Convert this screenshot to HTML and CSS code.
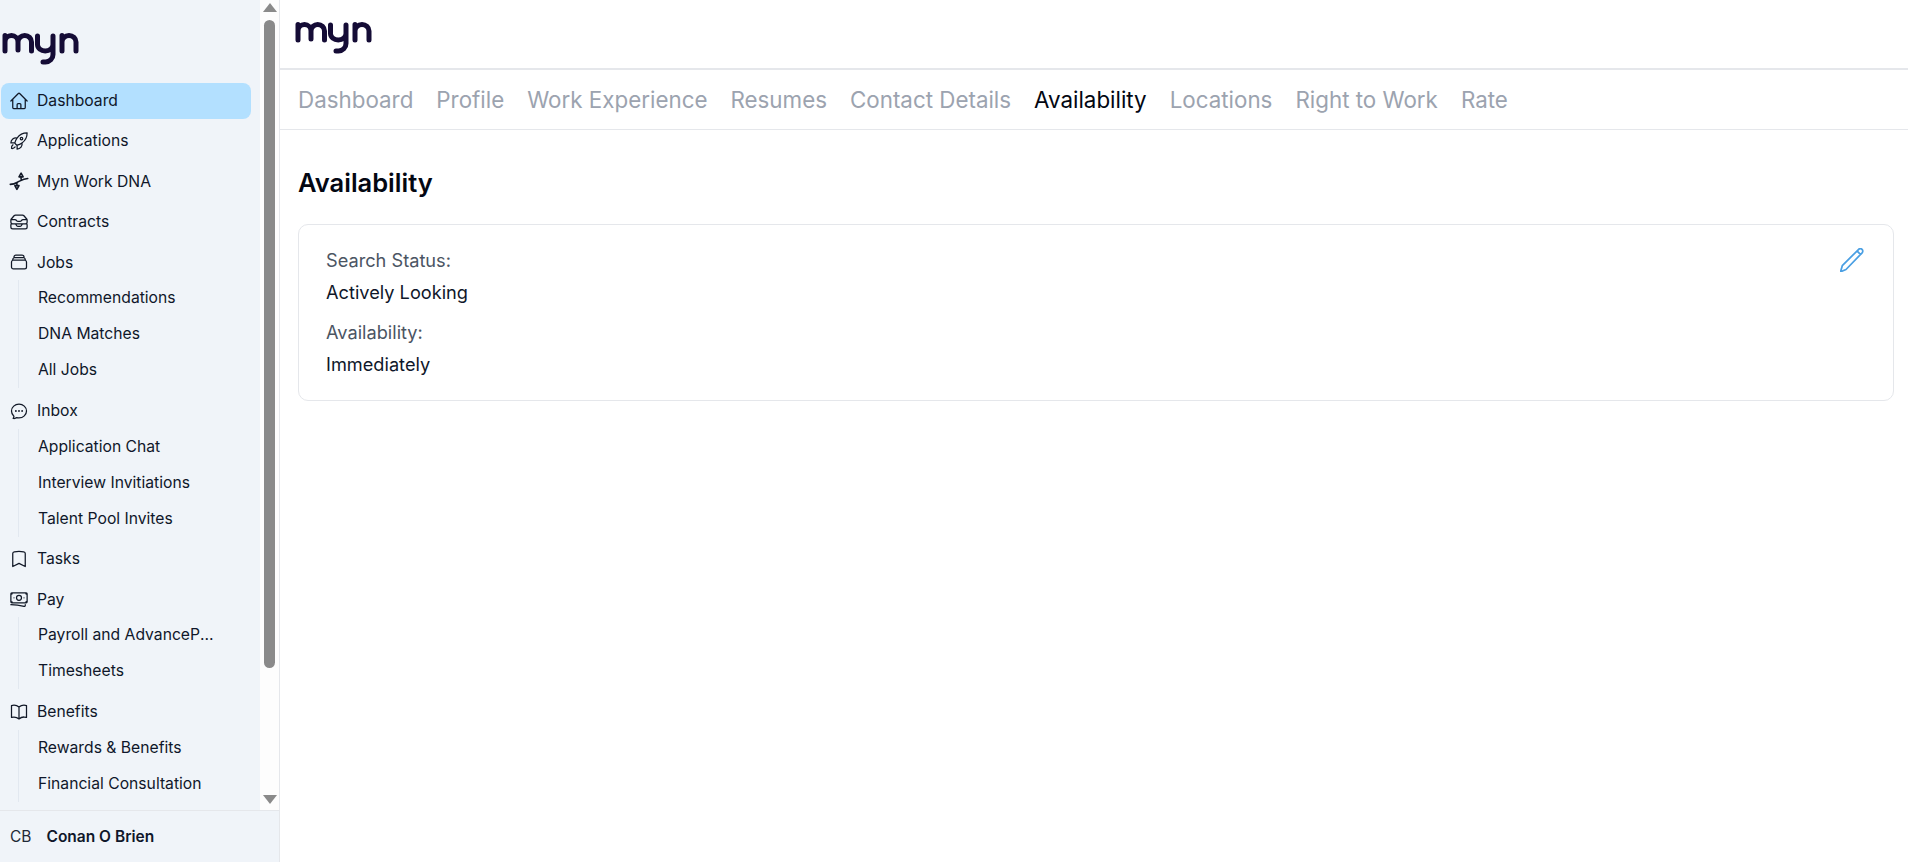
FILE: index.html
```html
<!DOCTYPE html>
<html lang="en">
<head>
<meta charset="utf-8">
<title>Availability</title>
<link rel="stylesheet" href="styles.css">
</head>
<body>
<svg class="defs" width="0" height="0" aria-hidden="true">
  <defs>
    <symbol id="logo" viewBox="0 0 80 36">
      <path d="M5 22V6.500M5 13a6.500 6.500 0 0 1 13 0V21M18 13a6.750 6.500 0 0 1 13.500 0V22M37.500 7V15.500a7.750 6.500 0 0 0 15.500 0V7M53 15V25.500a7.500 7.500 0 0 1-7.500 7.500H43M62 22V6.500M62 13a7 6.500 0 0 1 14 0V22" fill="none" stroke="#150c36" stroke-width="5" stroke-linecap="round" stroke-linejoin="round"/>
    </symbol>
  </defs>
</svg>
<div class="app">
  <aside class="sidebar">
    <div class="side-scroll">
      <nav class="side-nav">
        <svg class="logo logo-side"><use href="#logo"/></svg>
        <div class="groups">
          <a class="row active">
            <svg class="ico" viewBox="0 0 24 24"><path d="M2.250 12l8.954-8.955c.44-.439 1.152-.439 1.591 0L21.750 12M4.500 9.750v10.125c0 .621.504 1.125 1.125 1.125H9.750v-4.875c0-.621.504-1.125 1.125-1.125h2.250c.621 0 1.125.504 1.125 1.125V21h4.125c.621 0 1.125-.504 1.125-1.125V9.750M8.250 21h8.250"/></svg>
            <span>Dashboard</span>
          </a>
          <a class="row">
            <svg class="ico" viewBox="0 0 24 24"><path d="M15.590 14.370a6 6 0 0 1-5.840 7.380v-4.800m5.840-2.580a14.980 14.980 0 0 0 6.160-12.120A14.980 14.980 0 0 0 9.631 8.410m5.960 5.960a14.926 14.926 0 0 1-5.841 2.580m-.119-8.540a6 6 0 0 0-7.381 5.840h4.800m2.581-5.840a14.927 14.927 0 0 0-2.580 5.840m2.699 2.700c-.103.021-.207.041-.311.060a15.090 15.090 0 0 1-2.448-2.448 14.900 14.900 0 0 1 .060-.312m-2.240 2.390a4.493 4.493 0 0 0-1.757 4.306 4.493 4.493 0 0 0 4.306-1.758M16.500 9a1.500 1.500 0 1 1-3 0 1.500 1.500 0 0 1 3 0Z"/></svg>
            <span>Applications</span>
          </a>
          <a class="row">
            <svg class="ico ico-dna" viewBox="0 0 24 24"><path d="M1.500 16C7 16 9 14 12 12.500S17 9.500 22.500 9M14.500 2.500l-2.500 4.500h5l-2.500-4.500ZM14.500 7V10M9.500 22l-2.500-4.500h5L9.500 22ZM9.500 17.500V14.500"/></svg>
            <span>Myn Work DNA</span>
          </a>
          <a class="row">
            <svg class="ico" viewBox="0 0 24 24"><path d="M7.875 14.250l1.214 1.942a2.250 2.250 0 001.908 1.058h2.006c.776 0 1.497-.4 1.908-1.058l1.214-1.942M2.410 9h4.636a2.250 2.250 0 011.872 1.002l.164.246a2.250 2.250 0 001.872 1.002h2.092a2.250 2.250 0 001.872-1.002l.164-.246A2.250 2.250 0 0116.954 9h4.636M2.410 9a2.250 2.250 0 00-.16.832V12a2.250 2.250 0 002.250 2.250h15A2.250 2.250 0 0021.750 12V9.832c0-.287-.055-.57-.16-.832M2.410 9a2.250 2.250 0 01.382-.632l3.285-3.832a2.250 2.250 0 011.708-.786h8.430c.657 0 1.281.287 1.709.786l3.284 3.832c.163.19.291.404.382.632M4.500 20.250h15A2.250 2.250 0 0021.750 18v-2.625c0-.621-.504-1.125-1.125-1.125H3.375c-.621 0-1.125.504-1.125 1.125V18a2.250 2.250 0 002.250 2.250z"/></svg>
            <span>Contracts</span>
          </a>
          <div class="group">
            <a class="row">
              <svg class="ico" viewBox="0 0 24 24"><path d="M6 6.878V6a2.250 2.250 0 012.250-2.250h7.500A2.250 2.250 0 0118 6v.878m-12 0c.235-.083.487-.128.75-.128h10.500c.263 0 .515.045.75.128m-12 0A2.250 2.250 0 004.500 9v.878m13.500-3A2.250 2.250 0 0119.500 9v.878m0 0a2.246 2.246 0 00-.75-.128H5.250c-.263 0-.515.045-.75.128m15 0A2.250 2.250 0 0121 12v6a2.250 2.250 0 01-2.250 2.250H5.250A2.250 2.250 0 013 18v-6c0-.98.626-1.813 1.500-2.122"/></svg>
              <span>Jobs</span>
            </a>
            <div class="sub">
              <a class="sub-row">Recommendations</a>
              <a class="sub-row">DNA Matches</a>
              <a class="sub-row">All Jobs</a>
            </div>
          </div>
          <div class="group">
            <a class="row">
              <svg class="ico" viewBox="0 0 24 24"><path d="M8.625 12a.375.375 0 11-.75 0 .375.375 0 01.75 0zm0 0H8.250m4.125 0a.375.375 0 11-.75 0 .375.375 0 01.75 0zm0 0H12m4.125 0a.375.375 0 11-.75 0 .375.375 0 01.75 0zm0 0h-.375M21 12c0 4.556-4.030 8.250-9 8.250a9.764 9.764 0 01-2.555-.337A5.972 5.972 0 015.410 20.970a5.969 5.969 0 01-.474-.065 4.480 4.480 0 00.978-2.025c.09-.457-.133-.901-.467-1.226C3.930 16.178 3 14.189 3 12c0-4.556 4.030-8.250 9-8.250s9 3.694 9 8.250z"/></svg>
              <span>Inbox</span>
            </a>
            <div class="sub">
              <a class="sub-row">Application Chat</a>
              <a class="sub-row">Interview Invitiations</a>
              <a class="sub-row">Talent Pool Invites</a>
            </div>
          </div>
          <a class="row">
            <svg class="ico" viewBox="0 0 24 24"><path d="M17.593 3.322c1.100.128 1.907 1.077 1.907 2.185V21L12 17.250 4.500 21V5.507c0-1.108.806-2.057 1.907-2.185a48.507 48.507 0 0111.186 0z"/></svg>
            <span>Tasks</span>
          </a>
          <div class="group">
            <a class="row">
              <svg class="ico" viewBox="0 0 24 24"><path d="M2.250 18.750a60.070 60.070 0 0115.797 2.101c.727.198 1.453-.342 1.453-1.096V18.750M3.750 4.500v.75A.75.75 0 013 6h-.75m0 0v-.375c0-.621.504-1.125 1.125-1.125H20.250M2.250 6v9m18-10.500v.75c0 .414.336.75.75.75h.75m-1.500-1.500h.375c.621 0 1.125.504 1.125 1.125v9.750c0 .621-.504 1.125-1.125 1.125h-.375m1.500-1.500H21a.75.75 0 00-.75.75v.75m0 0H3.750m0 0h-.375a1.125 1.125 0 01-1.125-1.125V15m1.500 1.500v-.75A.75.75 0 003 15h-.75M15 10.500a3 3 0 11-6 0 3 3 0 016 0zm3 0h.008v.008H18V10.500zm-12 0h.008v.008H6V10.500z"/></svg>
              <span>Pay</span>
            </a>
            <div class="sub">
              <a class="sub-row">Payroll and AdvancePay</a>
              <a class="sub-row">Timesheets</a>
            </div>
          </div>
          <div class="group">
            <a class="row">
              <svg class="ico" viewBox="0 0 24 24"><path d="M12 6.042A8.967 8.967 0 006 3.750c-1.052 0-2.062.18-3 .512v14.250A8.987 8.987 0 016 18c2.305 0 4.408.867 6 2.292m0-14.250a8.966 8.966 0 016-2.292c1.052 0 2.062.18 3 .512v14.250A8.987 8.987 0 0018 18a8.967 8.967 0 00-6 2.292m0-14.250v14.250"/></svg>
              <span>Benefits</span>
            </a>
            <div class="sub">
              <a class="sub-row">Rewards &amp; Benefits</a>
              <a class="sub-row">Financial Consultation</a>
            </div>
          </div>
        </div>
      </nav>
      <div class="scrollbar">
        <span class="arrow arrow-up"></span>
        <span class="thumb"></span>
        <span class="arrow arrow-down"></span>
      </div>
    </div>
    <div class="side-foot">
      <span class="initials">CB</span>
      <strong class="user">Conan O Brien</strong>
    </div>
  </aside>
  <div class="main">
    <header class="topbar">
      <svg class="logo"><use href="#logo"/></svg>
    </header>
    <nav class="tabs">
      <a class="tab">Dashboard</a>
      <a class="tab">Profile</a>
      <a class="tab">Work Experience</a>
      <a class="tab">Resumes</a>
      <a class="tab">Contact Details</a>
      <a class="tab tab-on">Availability</a>
      <a class="tab">Locations</a>
      <a class="tab">Right to Work</a>
      <a class="tab">Rate</a>
    </nav>
    <section class="content">
      <h1 class="title">Availability</h1>
      <div class="card">
        <dl class="fields">
          <dt>Search Status:</dt>
          <dd>Actively Looking</dd>
          <dt>Availability:</dt>
          <dd>Immediately</dd>
        </dl>
        <svg class="pencil" viewBox="1 1.200 22 22"><path d="M1.500 23l1.600-5.600L17.900 2.600c1-1 2.400-1 3.300-.1s.9 2.300-.1 3.300L6.500 20.900 1.500 23ZM16.600 3.900l3.300 3.300"/></svg>
      </div>
    </section>
  </div>
</div>
</body>
</html>
```
FILE: styles.css
```css
* { box-sizing: border-box; }
html, body { margin: 0; height: 100%; }
body {
  font-family: Inter, "Liberation Sans", sans-serif;
  color: #0f172a;
  background: #fff;
  overflow: hidden;
}
.defs { position: absolute; }
.app { display: flex; height: 862px; }
.sidebar {
  width: 280px;
  flex: none;
  display: flex;
  flex-direction: column;
  background: #f0f4f9;
  border-right: 1px solid #e5e7eb;
}
.side-scroll { flex: 1; min-height: 0; display: flex; overflow: hidden; }
.side-nav { width: 260px; flex: none; padding: 29px 0 0 1px; overflow: hidden; }
.logo { display: block; width: 80px; height: 36px; }
.logo-side { margin: 0 0 17.600px -1px; }
.groups { display: flex; flex-direction: column; gap: 4.400px; width: 250px; }
.row {
  display: flex;
  align-items: center;
  gap: 8px;
  height: 36px;
  padding-left: 8px;
  border-radius: 8px;
  font-size: 15.700px;
  color: #0f172a;
}
.row.active { background: #b3e0ff; }
.ico {
  width: 20px;
  height: 20px;
  flex: none;
  fill: none;
  stroke: #111827;
  stroke-width: 1.500;
  stroke-linecap: round;
  stroke-linejoin: round;
}
.ico-dna { stroke-width: 1.900; }
.sub { margin-left: 17px; border-left: 1px solid #e2e8f0; padding-left: 19px; }
.sub-row {
  display: block;
  height: 36px;
  line-height: 36px;
  width: 177px;
  font-size: 15.700px;
  color: #0f172a;
  white-space: nowrap;
  overflow: hidden;
  text-overflow: ellipsis;
}
.scrollbar {
  width: 19px;
  flex: none;
  background: #fdfdfd;
  display: flex;
  flex-direction: column;
  align-items: center;
}
.arrow { width: 0; height: 0; border-left: 7px solid transparent; border-right: 7px solid transparent; flex: none; }
.arrow-up { border-bottom: 9px solid #8a8a8a; margin-top: 3px; }
.arrow-down { border-top: 9px solid #8a8a8a; margin-bottom: 6px; margin-top: auto; }
.thumb { width: 11px; height: 648px; margin-top: 8px; background: #8a8a8a; border-radius: 6px; flex: none; }
.side-foot {
  height: 52px;
  flex: none;
  display: flex;
  align-items: center;
  padding-left: 10px;
  gap: 15px;
  border-top: 1px solid #e5e7eb;
  font-size: 15.500px;
}
.initials { color: #1f2937; }
.user { font-weight: 600; color: #0f172a; }
.main { flex: 1; min-width: 0; display: flex; flex-direction: column; }
.topbar { height: 70px; flex: none; padding: 18px 0 0 12.500px; border-bottom: 2px solid #e5e7eb; }
.tabs {
  height: 60px;
  flex: none;
  display: flex;
  align-items: center;
  gap: 23px;
  padding-left: 18px;
  border-bottom: 1px solid #e5e7eb;
}
.tab { font-size: 22.370px; color: #9ca3af; }
.tab-on { color: #030712; }
.content { padding: 0 14px 0 18px; }
.title { margin: 36px 0 24px; font-size: 25.500px; line-height: 34px; font-weight: 600; color: #030712; }
.card {
  position: relative;
  height: 177px;
  padding: 19px 27px;
  border: 1px solid #e5e7eb;
  border-radius: 10px;
}
.fields { margin: 0; }
.fields dt { font-size: 18.200px; line-height: 32px; color: #4b5563; }
.fields dd { margin: 0 0 8px; font-size: 18.200px; line-height: 32px; color: #0f172a; }
.pencil {
  position: absolute;
  top: 23px;
  right: 29px;
  width: 24px;
  height: 24px;
  fill: none;
  stroke: #4a9fe3;
  stroke-width: 1.600;
  stroke-linejoin: round;
}
```
